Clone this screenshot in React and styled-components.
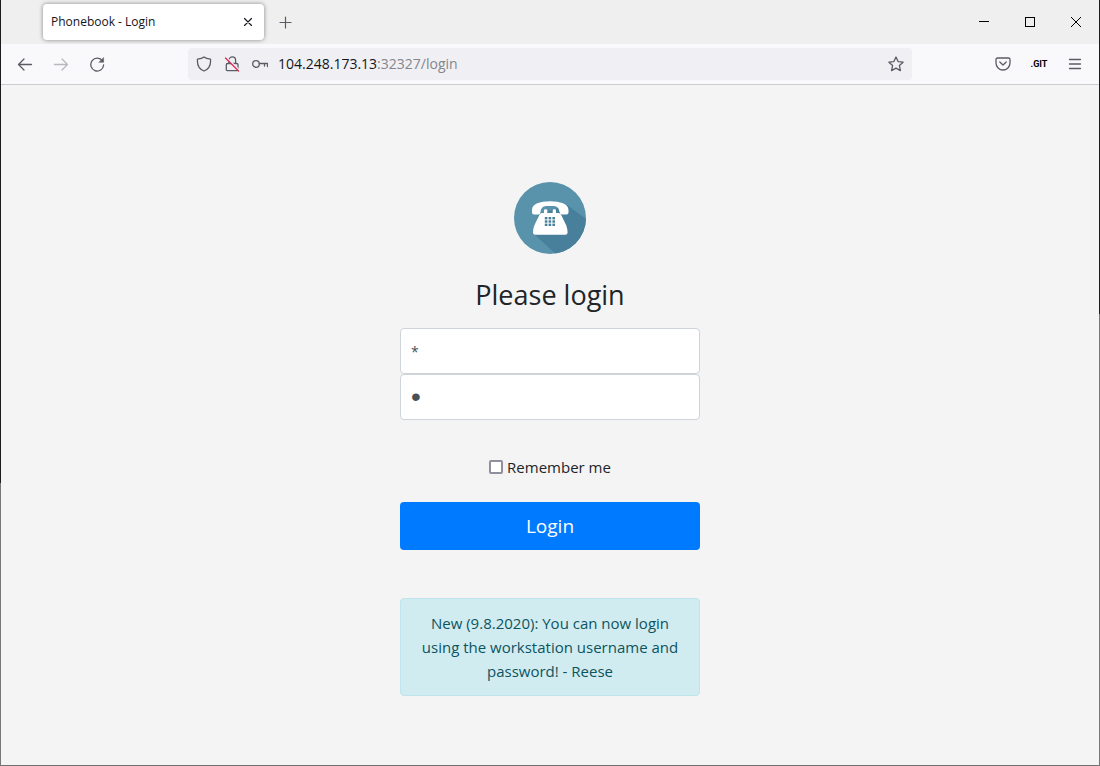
import React, { useState } from 'react'
import styled, { createGlobalStyle } from 'styled-components'

const uiFont = '"Open Sans", "Noto Sans", sans-serif'
const iconColor = '#5b5b66'
const textColor = '#212529'

const GlobalStyle = createGlobalStyle`
  *, *::before, *::after {
    box-sizing: border-box;
  }
  body {
    margin: 0;
    background: #f4f4f4;
    color: ${textColor};
    font-family: ${uiFont};
    font-size: 16px;
    line-height: 24px;
  }
`

/* the one pixel frame is darker along the upper part of both sides */
const Window = styled.div`
  display: flex;
  flex-direction: column;
  min-height: 100vh;
  padding: 0 1px 1px;
  background:
    linear-gradient(#1c1c1c 63%, #777 63%) left / 1px 100% no-repeat,
    linear-gradient(#1c1c1c 41%, #777 41%) right / 1px 100% no-repeat,
    linear-gradient(#707070, #707070) bottom / 100% 1px no-repeat;
`

const TitleBar = styled.header`
  display: flex;
  align-items: center;
  height: 44px;
  padding-left: 42px;
  background: #efefef;
`

const Tab = styled.div`
  display: flex;
  align-items: center;
  justify-content: space-between;
  width: 221px;
  height: 36px;
  padding: 0 8px;
  border-radius: 4px;
  background: #fff;
  box-shadow: 0 0 4px rgba(0, 0, 0, 0.45);
  color: #15141a;
  font-size: 12px;
`

const IconButton = styled.button`
  display: inline-flex;
  align-items: center;
  justify-content: center;
  width: ${({ $width }) => $width || 36}px;
  height: ${({ $height }) => $height || 32}px;
  padding: 0;
  border: none;
  background: none;
  color: ${({ $color }) => $color || iconColor};
  opacity: ${({ disabled }) => (disabled ? 0.4 : 1)};
`

const WindowControls = styled.div`
  display: flex;
  margin-left: auto;
`

const Toolbar = styled.nav`
  display: flex;
  align-items: center;
  height: 41px;
  border-bottom: 1px solid #cccccf;
  background: #f9f9fb;
`

const ToolGroup = styled.div`
  display: flex;
  flex: 0 0 187px;
  justify-content: ${({ $end }) => ($end ? 'flex-end' : 'flex-start')};
  padding: 0 6px;
`

const UrlBar = styled.div`
  display: flex;
  flex: 1;
  align-items: center;
  min-width: 0;
  height: 32px;
  padding: 0 2px;
  border-radius: 4px;
  background: #f0f0f4;
`

const Address = styled.a`
  flex: 1;
  margin-left: 4px;
  overflow: hidden;
  color: #85858c;
  font-size: 14px;
  text-decoration: none;
  white-space: nowrap;
`

const Host = styled.span`
  color: #15141a;
`

const ExtensionLabel = styled.span`
  font: bold 9px/12px "Liberation Sans Narrow", Roboto, sans-serif;
`

const Page = styled.main`
  flex: 1;
  padding: 97px 16px 48px;
`

const LoginForm = styled.form`
  display: flex;
  flex-direction: column;
  align-items: center;
  max-width: 300px;
  margin: 0 auto;
  text-align: center;
`

const Title = styled.h1`
  margin: 24px 0 16px;
  font-size: 27px;
  font-weight: 400;
  line-height: 34px;
`

const Field = styled.input`
  width: 100%;
  height: 46px;
  padding: 0 10px;
  border: 1px solid #ced4da;
  border-radius: 4px;
  background: #fff;
  color: #495057;
  font-family: ${uiFont};
  font-size: 14px;
  outline: none;

  &[type='password'] {
    font-family: "Liberation Sans", sans-serif;
    font-size: 28px;
  }
`

const Remember = styled.label`
  display: flex;
  align-items: center;
  gap: 4px;
  margin: 35px 0 23px;
  font-size: 15px;
`

const Checkbox = styled.input`
  appearance: none;
  width: 14px;
  height: 14px;
  margin: 0;
  border: 2px solid #8f8f9d;
  border-radius: 2px;
  background: ${({ checked }) => (checked ? '#007bff' : '#fff')};
`

const SubmitButton = styled.button`
  width: 100%;
  height: 48px;
  padding: 0;
  border: none;
  border-radius: 4px;
  background: #007bff;
  color: #fff;
  font-family: ${uiFont};
  font-size: 19px;
`

const Notice = styled.div`
  width: 100%;
  margin-top: 48px;
  padding: 12px 18px;
  border: 1px solid #bee5eb;
  border-radius: 4px;
  background: #d1ecf1;
  color: #0c5460;
  font-size: 15px;
`

function Icon({ size = 16, width = 1.3, children }) {
  return (
    <svg
      width={size}
      height={size}
      viewBox={`0 0 ${size} ${size}`}
      fill="none"
      stroke="currentColor"
      strokeWidth={width}
      strokeLinecap="round"
      strokeLinejoin="round"
      aria-hidden="true"
    >
      {children}
    </svg>
  )
}

function PhoneLogo() {
  return (
    <svg width="72" height="72" viewBox="0 0 72 72" role="img" aria-label="Phonebook">
      <defs>
        <clipPath id="disc">
          <circle cx="36" cy="36" r="36" />
        </clipPath>
      </defs>
      <circle cx="36" cy="36" r="36" fill="#5893ab" />
      <path d="M53 23 L76 40 V76 H46 L20 52 L24 33 Z" fill="#487f9a" clipPath="url(#disc)" />
      <path
        d="M18 28 C18 22 26 19.3 36 19.3 S54.5 22 54.5 28 V30.5 Q54.5 32.6 52.5 32.6 H48 Q46 32.6 45.5 30 C45 26 43 24 39 24 H33 C29 24 27 26 26.5 30 Q26 32.6 24.5 32.6 H20 Q18 32.6 18 30.5 Z"
        fill="#fff"
      />
      <path
        d="M30 31 V28.5 Q30 27.3 31.2 27.3 H32.1 Q33.3 27.3 33.3 28.5 V31 H38.7 V28.5 Q38.7 27.3 39.9 27.3 H40.8 Q42 27.3 42 28.5 V31 H44.5 Q46 31 47 32.6 L52.3 43.5 Q53.6 47 53.6 50.5 Q53.6 52.8 51.3 52.8 H21.3 Q19 52.8 19 50.5 Q19 47 20.3 43.5 L25.5 32.6 Q26.5 31 28 31 Z"
        fill="#fff"
      />
      {[35, 38.3, 41.6].map(y => [30.8, 34.6, 38.4].map(x => (
        <rect key={`${x}-${y}`} x={x} y={y} width="2.6" height="2.4" fill="#487f9a" />
      )))}
    </svg>
  )
}

function App() {
  const [username, setUsername] = useState('*')
  const [password, setPassword] = useState('*')
  const [remember, setRemember] = useState(false)

  return (
    <>
      <GlobalStyle />
      <Window>
        <TitleBar>
          <Tab>
            <span>Phonebook - Login</span>
            <IconButton type="button" $width={16} $height={16} $color="#15141a" aria-label="Close tab">
              <Icon width={1.1}><path d="M4.5 4.500l7 7M11.500 4.500l-7 7" /></Icon>
            </IconButton>
          </Tab>
          <IconButton type="button" $width={42} aria-label="New tab">
            <Icon width={1.2}><path d="M8.500 3v11M3 8.500h11" /></Icon>
          </IconButton>
          <WindowControls>
            <IconButton type="button" $width={46} $color="#000" aria-label="Minimize">
              <svg width="10" height="10" shapeRendering="crispEdges"><path d="M0 4.5h10" stroke="#000" /></svg>
            </IconButton>
            <IconButton type="button" $width={46} $color="#000" aria-label="Maximize">
              <svg width="10" height="10"><rect x=".5" y=".5" width="9" height="9" fill="none" stroke="#000" /></svg>
            </IconButton>
            <IconButton type="button" $width={46} $color="#000" aria-label="Close window">
              <svg width="10" height="10"><path d="M0 0l10 10M10 0L0 10" stroke="#000" /></svg>
            </IconButton>
          </WindowControls>
        </TitleBar>

        <Toolbar>
          <ToolGroup>
            <IconButton type="button" aria-label="Back">
              <Icon><path d="M14.500 8.500H1.500M7 3L1.500 8.500 7 14" /></Icon>
            </IconButton>
            <IconButton type="button" disabled aria-label="Forward">
              <Icon><path d="M1.500 8.500h13M9 3L14.500 8.500 9 14" /></Icon>
            </IconButton>
            <IconButton type="button" aria-label="Reload">
              <Icon>
                <path d="M13.500 5A6.400 6.400 0 1 0 14.600 9" />
                <path d="M14.600 1.800v4.500h-4.500z" fill="currentColor" strokeWidth=".5" />
              </Icon>
            </IconButton>
          </ToolGroup>
          <UrlBar>
            <IconButton type="button" $width={28} aria-label="Tracking protection">
              <Icon><path d="M8 1C6.500 2.200 4 2.900 1.500 3.200 1 8.500 3 13 8 15c5-2 7-6.500 6.500-11.800C12 2.900 9.500 2.200 8 1z" /></Icon>
            </IconButton>
            <IconButton type="button" $width={28} aria-label="Connection is not secure">
              <Icon>
                <path d="M5 7V4.200a3.300 3.300 0 0 1 6.600 0V7M3.500 7.500h9.300q1.200 0 1.200 1.200v4.800q0 1.200-1.200 1.200H3.500q-1.200 0-1.200-1.200V8.700q0-1.200 1.200-1.200z" />
                <path d="M2.800 1.700l12.700 12.700" stroke="#f0f0f4" strokeWidth="1.500" />
                <path d="M1.500 2l13 13" stroke="#e22850" />
              </Icon>
            </IconButton>
            <IconButton type="button" $width={28} aria-label="Saved login">
              <Icon><circle cx="4" cy="8" r="3.300" /><path d="M7.300 7.500h8.200v3M12.500 7.500v2.500" /></Icon>
            </IconButton>
            <Address href="#login"><Host>104.248.173.13</Host>:32327/login</Address>
            <IconButton type="button" $width={28} aria-label="Bookmark this page">
              <Icon><path d="M8 1l2.100 4.600 5 .6-3.700 3.400 1 5L8 12.100l-4.400 2.500 1-5L.9 6.200l5-.6z" /></Icon>
            </IconButton>
          </UrlBar>
          <ToolGroup $end>
            <IconButton type="button" aria-label="Save to Pocket">
              <Icon>
                <path d="M2.500 2h11Q15 2 15 3.500V7A7 7 0 0 1 1 7V3.500Q1 2 2.500 2z" />
                <path d="M4.800 6L8 9l3.200-3" />
              </Icon>
            </IconButton>
            <IconButton type="button" $color="#000"><ExtensionLabel>.GIT</ExtensionLabel></IconButton>
            <IconButton type="button" aria-label="Open menu">
              <Icon><path d="M2.500 3.500h11M2.500 8h11M2.500 12.500h11" /></Icon>
            </IconButton>
          </ToolGroup>
        </Toolbar>

        <Page>
          <LoginForm onSubmit={e => e.preventDefault()}>
            <PhoneLogo />
            <Title>Please login</Title>
            <Field
              type="text"
              aria-label="Username"
              value={username}
              onChange={e => setUsername(e.target.value)}
            />
            <Field
              type="password"
              aria-label="Password"
              value={password}
              onChange={e => setPassword(e.target.value)}
            />
            <Remember>
              <Checkbox type="checkbox" checked={remember} onChange={e => setRemember(e.target.checked)} />
              Remember me
            </Remember>
            <SubmitButton type="submit">Login</SubmitButton>
            <Notice>
              New (9.8.2020): You can now login using the workstation username and password! - Reese
            </Notice>
          </LoginForm>
        </Page>
      </Window>
    </>
  )
}

export default App
